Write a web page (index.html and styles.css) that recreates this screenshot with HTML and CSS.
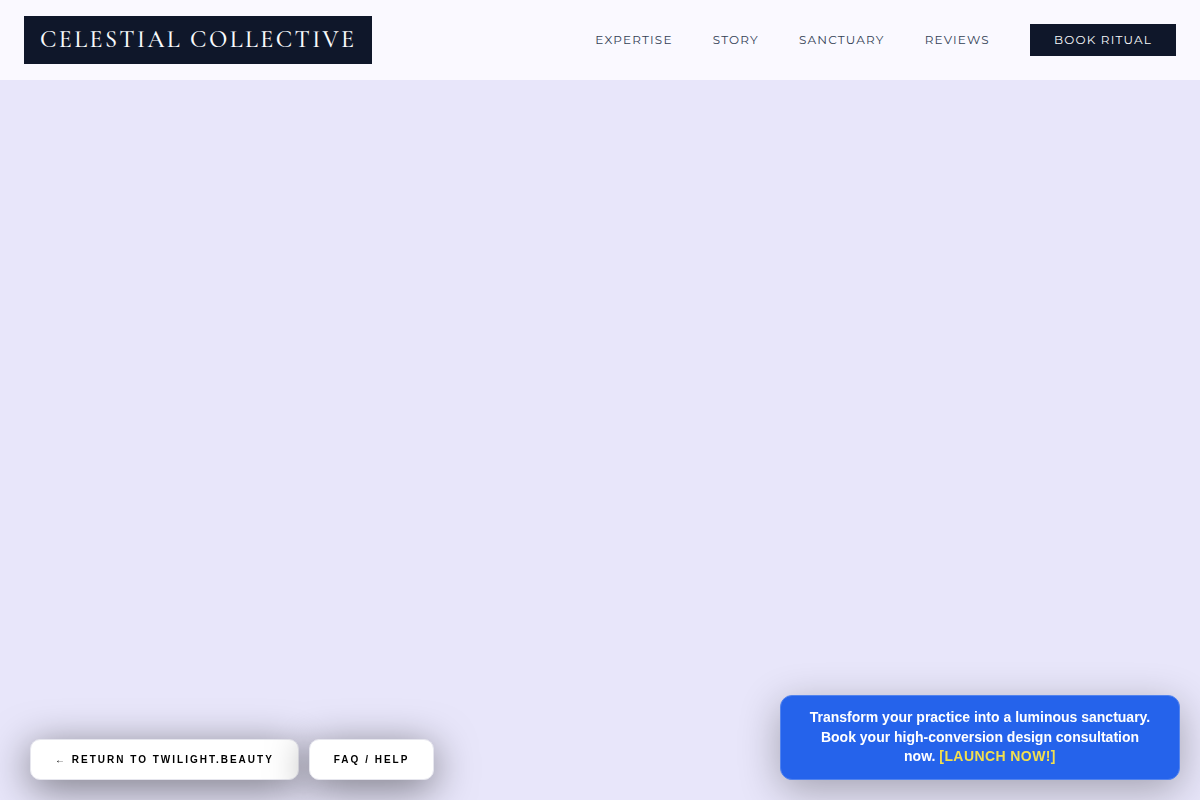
FILE: index.html
```html
<!DOCTYPE html>
<html lang="en">
<head>
<meta charset="utf-8">
<meta name="viewport" content="width=device-width, initial-scale=1">
<title>Celestial Collective</title>
<link rel="stylesheet" href="styles.css">
</head>
<body>
<header class="site-header">
  <a class="logo" href="#home">CELESTIAL COLLECTIVE</a>
  <nav class="site-nav" aria-label="Main">
    <a class="nav-link" href="#expertise">EXPERTISE</a>
    <a class="nav-link" href="#story">STORY</a>
    <a class="nav-link" href="#sanctuary">SANCTUARY</a>
    <a class="nav-link" href="#reviews">REVIEWS</a>
    <button class="book-button" type="button">BOOK RITUAL</button>
  </nav>
</header>
<main class="hero"></main>
<div class="dock">
  <a class="dock-link" href="#return">← RETURN TO TWILIGHT.BEAUTY</a>
  <a class="dock-link" href="#faq">FAQ / HELP</a>
</div>
<a class="promo" href="#launch">Transform your practice into a luminous sanctuary. Book your high-conversion design consultation now. <span class="promo-action">[LAUNCH NOW!]</span></a>
</body>
</html>
```

FILE: styles.css
```css
* {
  box-sizing: border-box;
}

body {
  margin: 0;
  min-height: 100vh;
  display: flex;
  flex-direction: column;
  background: #e8e6fa;
  font-family: Montserrat, Inter, "Liberation Sans", sans-serif;
}

a {
  text-decoration: none;
}

.site-header {
  display: flex;
  align-items: center;
  justify-content: space-between;
  padding: 16px 24px;
  background: #faf9ff;
}

.logo {
  padding: 8px 16px;
  background: #0f172a;
  color: #f8fafc;
  font-family: "Cormorant Garamond", "Liberation Serif", serif;
  font-size: 24px;
  font-weight: 500;
  line-height: 32px;
  letter-spacing: 0.1em;
  white-space: nowrap;
}

.site-nav {
  display: flex;
  align-items: center;
  gap: 40px;
}

.nav-link,
.book-button {
  font-family: inherit;
  font-size: 12px;
  line-height: 16px;
  letter-spacing: 0.1em;
  white-space: nowrap;
}

.nav-link {
  color: #334155;
}

.book-button {
  padding: 8px 24px;
  border: 0;
  border-radius: 0;
  background: #0f172a;
  color: #f8fafc;
  cursor: pointer;
}

.hero {
  flex: 1;
}

.dock {
  position: fixed;
  left: 30px;
  bottom: 20px;
  display: flex;
  gap: 10px;
}

.dock-link {
  padding: 12px 24px;
  border: 1px solid #e6e6ee;
  border-radius: 10px;
  background: #ffffff;
  color: #000000;
  box-shadow: 0 8px 40px rgba(0, 0, 0, 0.5);
  font-family: "Liberation Sans", Arial, sans-serif;
  font-size: 10px;
  font-weight: 700;
  line-height: 15px;
  letter-spacing: 2px;
  white-space: nowrap;
}

.promo {
  position: fixed;
  right: 20px;
  bottom: 20px;
  width: 400px;
  max-width: calc(100vw - 40px);
  padding: 12px 24px;
  border: 1px solid #5283ee;
  border-radius: 12px;
  background: #2563eb;
  color: #ffffff;
  box-shadow: 0 10px 40px rgba(0, 0, 0, 0.3);
  font-family: "Liberation Sans", Arial, sans-serif;
  font-size: 14px;
  font-weight: 700;
  line-height: 1.4;
  text-align: center;
}

.promo-action {
  color: #f2df4e;
  letter-spacing: 0.03em;
}
```
